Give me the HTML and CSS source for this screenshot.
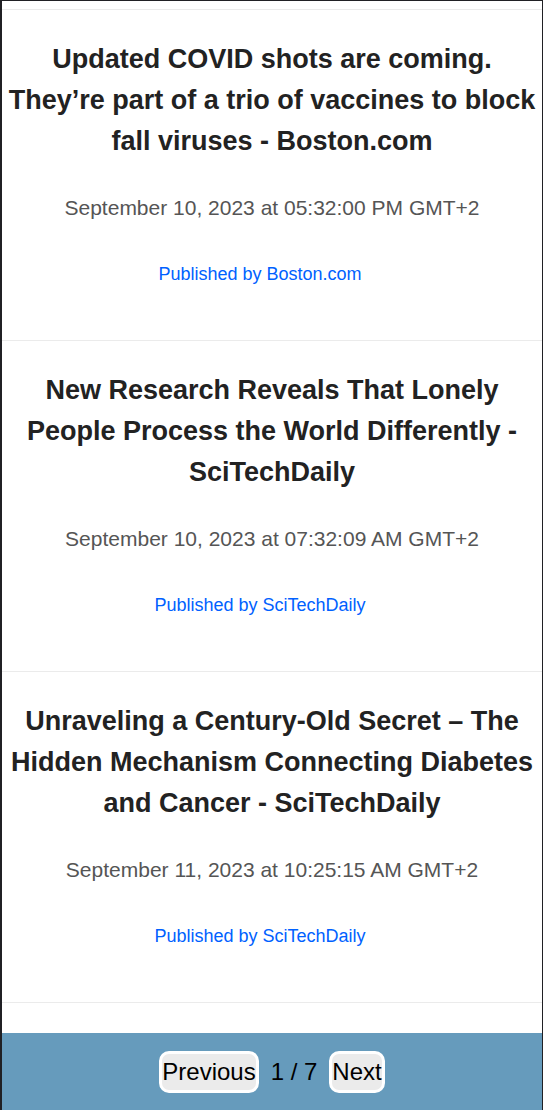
FILE: index.html
```html
<!DOCTYPE html>
<html lang="en">
<head>
<meta charset="utf-8">
<meta name="viewport" content="width=device-width, initial-scale=1">
<title>News</title>
<link rel="stylesheet" href="styles.css">
</head>
<body>
<main class="feed">
  <article class="story">
    <h2 class="title">Updated COVID shots are coming. They’re part of a trio of vaccines to block fall viruses - Boston.com</h2>
    <p class="date">September 10, 2023 at 05:32:00 PM GMT+2</p>
    <a class="source" href="#">Published by Boston.com</a>
  </article>
  <article class="story">
    <h2 class="title">New Research Reveals That Lonely People Process the World Differently - SciTechDaily</h2>
    <p class="date">September 10, 2023 at 07:32:09 AM GMT+2</p>
    <a class="source" href="#">Published by SciTechDaily</a>
  </article>
  <article class="story">
    <h2 class="title">Unraveling a Century-Old Secret – The Hidden Mechanism Connecting Diabetes and Cancer - SciTechDaily</h2>
    <p class="date">September 11, 2023 at 10:25:15 AM GMT+2</p>
    <a class="source" href="#">Published by SciTechDaily</a>
  </article>
</main>
<nav class="pager" aria-label="Pages">
  <button class="page-button" type="button">Previous</button>
  <span class="page-count">1 / 7</span>
  <button class="page-button" type="button">Next</button>
</nav>
</body>
</html>
```
FILE: styles.css
```css
* { box-sizing: border-box; }
body {
  margin: 0;
  min-height: 100vh;
  display: flex;
  flex-direction: column;
  border-top: 1px solid #202024;
  border-left: 2px solid #202024;
  border-right: 1px solid #202024;
  background: #fff;
  color: #222;
  font-family: "Liberation Sans", Arial, sans-serif;
}
.feed { padding-top: 8px; }
.story {
  display: flex;
  flex-direction: column;
  align-items: center;
  padding: 29px 4px 49px;
  border-top: 1px solid #ebebeb;
  text-align: center;
}
.story:last-child { border-bottom: 1px solid #ebebeb; }
.title {
  margin: 0;
  font-size: 27px;
  line-height: 41px;
  font-weight: 700;
}
.date {
  margin: 29px 0 32px;
  color: #555;
  font-size: 21px;
  line-height: 34px;
}
.source {
  margin-right: 24px;
  color: #0061ff;
  font-size: 18px;
  line-height: 34px;
  text-decoration: none;
}
.pager {
  display: flex;
  align-items: center;
  justify-content: center;
  gap: 12px;
  margin-top: auto;
  padding: 18px 0 17px;
  background: #669bbc;
  color: #000;
  font-size: 24px;
  line-height: 36px;
}
.page-button {
  padding: 0;
  border: 3px solid #fff;
  border-radius: 10px;
  background: #ebebeb;
  color: #000;
  font: inherit;
}
```
